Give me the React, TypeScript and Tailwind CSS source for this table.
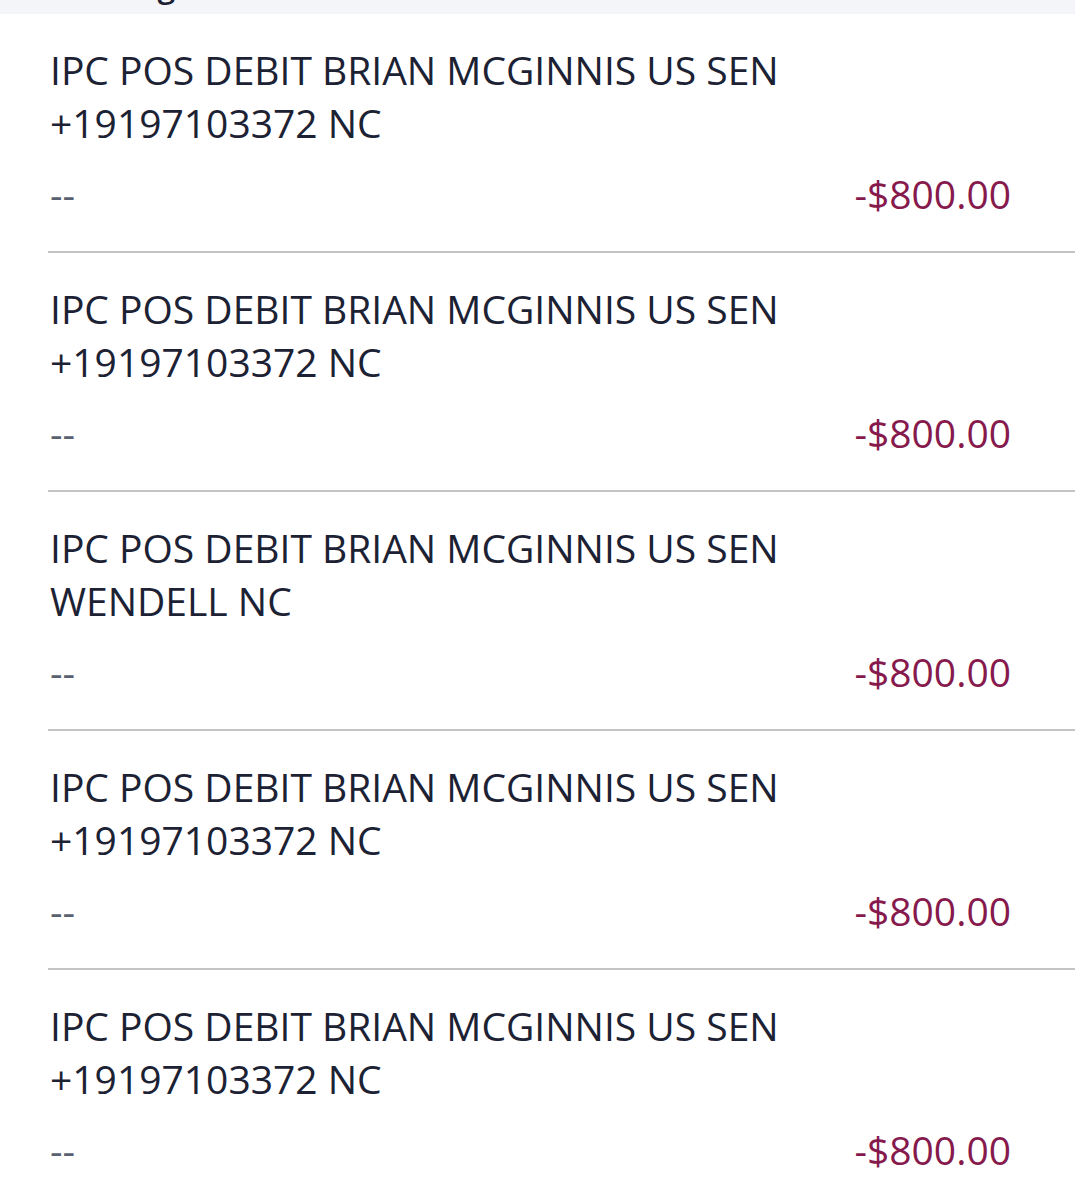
const transactions = [
  { desc: "IPC POS DEBIT BRIAN MCGINNIS US SEN", place: "+19197103372 NC", memo: "--", amount: "-$800.00" },
  { desc: "IPC POS DEBIT BRIAN MCGINNIS US SEN", place: "+19197103372 NC", memo: "--", amount: "-$800.00" },
  { desc: "IPC POS DEBIT BRIAN MCGINNIS US SEN", place: "WENDELL NC", memo: "--", amount: "-$800.00" },
  { desc: "IPC POS DEBIT BRIAN MCGINNIS US SEN", place: "+19197103372 NC", memo: "--", amount: "-$800.00" },
  { desc: "IPC POS DEBIT BRIAN MCGINNIS US SEN", place: "+19197103372 NC", memo: "--", amount: "-$800.00" },
];

export default function App() {
  return (
    <div className="w-[1075px] h-[1200px] overflow-hidden bg-white font-['Open_Sans',sans-serif]">
      {/* section header, scrolled mostly out of view */}
      <div className="h-[14px] overflow-hidden bg-[#f4f5f8] pl-[50px]">
        <div className="-mt-[35px] text-[32px] leading-[40px] font-semibold text-[#1c2233]">Pending</div>
      </div>

      <ul className="pl-[48px]">
        {transactions.map((t, i) => (
          <li key={i} className="border-b-2 border-[#c4c4c6] pt-[29px] pb-[31px] pr-[64px]">
            <div className="pl-[2px] text-[39px] leading-[53px] text-[#1c2233]">
              <div>{t.desc}</div>
              <div>{t.place}</div>
            </div>
            <div className="mt-[18px] pl-[2px] flex items-baseline justify-between text-[39px] leading-[53px]">
              <span className="text-[#596070]">{t.memo}</span>
              <span className="text-[#861a4c]">{t.amount}</span>
            </div>
          </li>
        ))}
      </ul>
    </div>
  );
}
